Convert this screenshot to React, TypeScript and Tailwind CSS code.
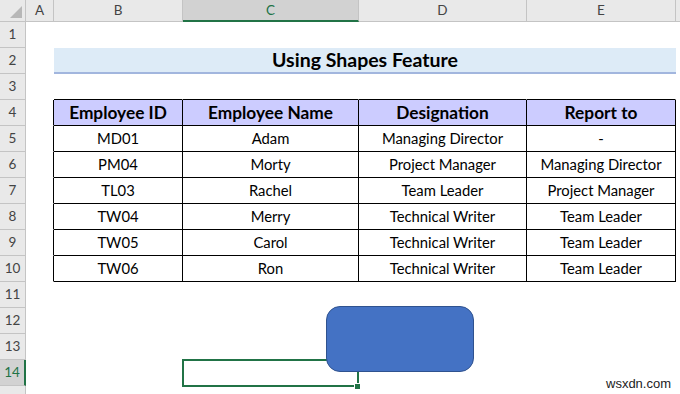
import React from 'react';

const cols = [
	{ key: 'A', w: 'w-[28px]' },
	{ key: 'B', w: 'w-[129px]' },
	{ key: 'C', w: 'w-[176px]' },
	{ key: 'D', w: 'w-[168px]' },
	{ key: 'E', w: 'w-[149px]' },
];

const headers = ['Employee ID', 'Employee Name', 'Designation', 'Report to'];

const people = [
	['MD01', 'Adam', 'Managing Director', '-'],
	['PM04', 'Morty', 'Project Manager', 'Managing Director'],
	['TL03', 'Rachel', 'Team Leader', 'Project Manager'],
	['TW04', 'Merry', 'Technical Writer', 'Team Leader'],
	['TW05', 'Carol', 'Technical Writer', 'Team Leader'],
	['TW06', 'Ron', 'Technical Writer', 'Team Leader'],
];

const widths = ['w-[129px]', 'w-[176px]', 'w-[168px]', 'w-[149px]'];

const RowHead: React.FC<{ n?: number; active?: boolean }> = ({ n, active }) => (
	<div className={`w-[26px] shrink-0 h-full flex items-center justify-center border-b border-r text-[13.5px] ${active ? 'bg-[#d2d2d2] text-[#217346] border-r-2 border-r-[#217346] border-b-[#c4c4c4]' : 'bg-[#e9e9e9] text-[#444] border-[#c4c4c4]'}`}>
		{n}
	</div>
);

const Blank: React.FC<{ w: string; cls?: string }> = ({ w, cls }) => (
	<div className={`${w} shrink-0 h-full border-r border-b ${cls ?? 'border-white'}`} />
);

const App: React.FC = () => {
	const rowsAfter = [11, 12, 13, 14];

	return (
		<div className="relative w-[680px] h-[394px] overflow-hidden bg-white font-['Lato',sans-serif] text-black">
			{/* column header */}
			<div className="flex h-[22px]">
				<div className="w-[26px] shrink-0 h-full bg-[#e9e9e9] border-r border-b border-[#c4c4c4] relative">
					<div className="absolute right-[3px] bottom-[3px] w-0 h-0 border-l-[12px] border-l-transparent border-b-[12px] border-b-[#b7b7b7]" />
				</div>
				{cols.map((c) => (
					<div key={c.key} className={`${c.w} shrink-0 h-full flex items-center justify-center text-[13.5px] border-r ${c.key === 'C' ? 'bg-[#d2d2d2] text-[#217346] border-b-2 border-b-[#217346] border-r-[#c4c4c4]' : 'bg-[#e9e9e9] text-[#444] border-b border-[#c4c4c4]'}`}>
						{c.key}
					</div>
				))}
				<div className="flex-1 h-full bg-[#e9e9e9] border-b border-[#c4c4c4]" />
			</div>

			<div className="flex h-[26px]">
				<RowHead n={1} />
			</div>

			{/* title row */}
			<div className="flex h-[26px]">
				<RowHead n={2} />
				<Blank w="w-[28px]" />
				<div className="w-[622px] shrink-0 h-full bg-[#ddebf7] border-b-2 border-[#a2b6de] flex items-center justify-center font-bold text-[19.5px]">
					Using Shapes Feature
				</div>
			</div>

			{/* row 3 carries the table's top edge */}
			<div className="flex h-[26px]">
				<RowHead n={3} />
				<Blank w="w-[28px]" />
				{widths.map((w, i) => (
					<div key={i} className={`${w} shrink-0 h-full border-b border-b-black border-r border-r-white`} />
				))}
			</div>

			{/* table header */}
			<div className="flex h-[26px]">
				<RowHead n={4} />
				<Blank w="w-[28px]" cls="border-r-black border-b-white" />
				{headers.map((h, i) => (
					<div key={h} className={`${widths[i]} shrink-0 h-full bg-[#ccccff] border-r border-b border-black flex items-center justify-center font-bold text-[17.3px]`}>
						{h}
					</div>
				))}
			</div>

			{people.map((p, r) => (
				<div key={p[0]} className="flex h-[26px]">
					<RowHead n={5 + r} />
					<Blank w="w-[28px]" cls="border-r-black border-b-white" />
					{p.map((v, i) => (
						<div key={i} className={`${widths[i]} shrink-0 h-full border-r border-b border-black flex items-center justify-center text-[14.8px]`}>
							{v}
						</div>
					))}
				</div>
			))}

			{rowsAfter.map((n) => (
				<div key={n} className="flex h-[26px]">
					<RowHead n={n} active={n === 14} />
				</div>
			))}
			<div className="flex h-[26px]">
				<RowHead />
			</div>

			{/* active cell C14 */}
			<div className="absolute left-[182px] top-[359px] w-[177px] h-[28px] border-2 border-[#217346]" />
			<div className="absolute left-[354px] top-[383px] w-[7px] h-[7px] bg-[#217346] border border-white" />

			{/* rounded rectangle shape */}
			<div className="absolute left-[326px] top-[306px] w-[148px] h-[66px] rounded-[14px] bg-[#4472c4] border border-[#2f528f]" />

			<div className="absolute left-[606px] top-[376px] text-[13px] leading-[16px] text-[#222] font-['Liberation_Sans',sans-serif]">
				wsxdn.com
			</div>
		</div>
	);
};

export default App;
